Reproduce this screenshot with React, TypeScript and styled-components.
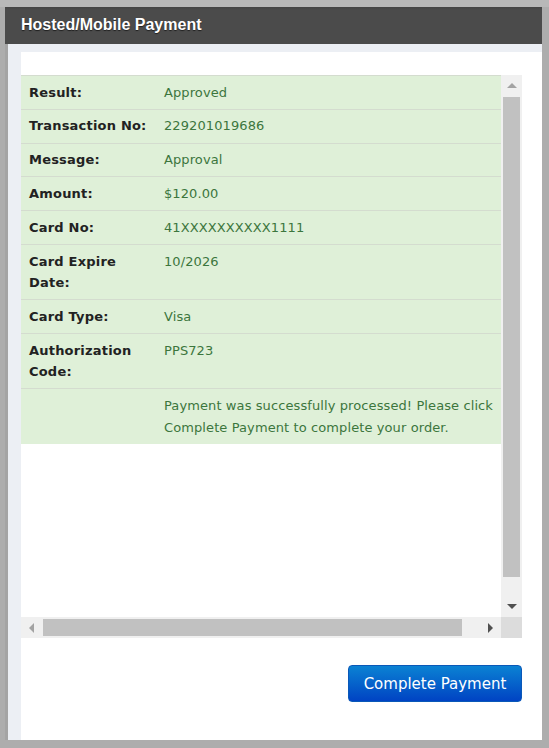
import React from 'react';
import styled, { createGlobalStyle } from 'styled-components';

const GlobalStyle = createGlobalStyle`
  html, body {
    margin: 0;
    padding: 0;
    background: #afafaf;
  }
  * {
    box-sizing: border-box;
  }
`;

const Page = styled.div`
  height: 748px;
  padding: 7px 7px 8px 5px;
  display: flex;
  background: linear-gradient(#b8b8b8 0, #b8b8b8 7px, #adadad 7px);
`;

const Window = styled.div`
  flex: 1;
  display: flex;
  flex-direction: column;
  background: #eceff4;
`;

const Header = styled.div`
  height: 37px;
  display: flex;
  align-items: center;
  padding: 0 0 2px 16px;
  background: linear-gradient(#444 0, #4b4b4b 3px, #4b4b4b 100%);
  color: #fff;
  font-family: 'Liberation Sans', Arial, sans-serif;
  font-weight: bold;
  font-size: 16px;
  text-shadow: 0 1px 1px rgba(0, 0, 0, 0.6);
`;

const Body = styled.div`
  flex: 1;
  display: flex;
  border-left: 3px solid #a4a4a4;
  padding: 8px 0 0 13px;
`;

const Content = styled.div`
  flex: 1;
  display: flex;
  flex-direction: column;
  background: #fff;
  padding: 23px 20px 0 0;
`;

const ScrollBox = styled.div`
  height: 563px;
  display: grid;
  grid-template-columns: 1fr 21px;
  grid-template-rows: 1fr 21px;
`;

const Viewport = styled.div`
  overflow: hidden;
  background: #fff;
`;

const VTrack = styled.div`
  background: #f0f0f0;
  display: grid;
  grid-template-rows: 21px 1fr 21px;
  padding: 0 2px;
`;

const HTrack = styled.div`
  background: #f0f0f0;
  display: grid;
  grid-template-columns: 21px 1fr 21px;
  padding: 2px 0;
`;

const Corner = styled.div`
  background: #dcdcdc;
`;

const ArrowBtn = styled.div`
  display: flex;
  align-items: center;
  justify-content: center;
`;

const VThumbArea = styled.div`
  padding: 1px 0 19px;
  display: flex;
`;

const HThumbArea = styled.div`
  padding: 0 18px 0 1px;
  display: flex;
`;

const Thumb = styled.div`
  flex: 1;
  background: #c1c1c1;
`;

const Triangle = styled.span<{ $dir: 'up' | 'down' | 'left' | 'right'; $color: string }>`
  width: 0;
  height: 0;
  border-style: solid;
  ${({ $dir, $color }) =>
    $dir === 'up'
      ? `border-width: 0 5px 5px 5px; border-color: transparent transparent ${$color} transparent;`
      : $dir === 'down'
      ? `border-width: 5px 5px 0 5px; border-color: ${$color} transparent transparent transparent;`
      : $dir === 'left'
      ? `border-width: 5px 5px 5px 0; border-color: transparent ${$color} transparent transparent;`
      : `border-width: 5px 0 5px 5px; border-color: transparent transparent transparent ${$color};`}
`;

const ResultTable = styled.table`
  width: 100%;
  border-collapse: collapse;
  table-layout: fixed;
  font-family: 'DejaVu Sans', Verdana, sans-serif;
  font-size: 13px;
  line-height: 21.6px;
`;

const Row = styled.tr`
  background: #dff0d8;
  border-top: 1px solid #d4dccf;
`;

const Label = styled.td`
  width: 135px;
  padding: 5.6px 8px;
  font-weight: bold;
  letter-spacing: 0.2px;
  color: #222;
  vertical-align: top;
`;

const Value = styled.td`
  padding: 5.6px 8px;
  letter-spacing: 0.1px;
  color: #3c763d;
  vertical-align: top;
`;

const Footer = styled.div`
  display: flex;
  justify-content: flex-end;
  padding-top: 27px;
`;

const PayButton = styled.button`
  height: 37px;
  width: 174px;
  border: 1px solid #0a58b8;
  border-radius: 4px;
  background: linear-gradient(#0b82d3, #0043c3);
  color: #fff;
  font-family: 'DejaVu Sans', Verdana, sans-serif;
  font-size: 15px;
  padding: 1px 0 0;
  cursor: pointer;
`;

const rows: [string, string][] = [
  ['Result:', 'Approved'],
  ['Transaction No:', '229201019686'],
  ['Message:', 'Approval'],
  ['Amount:', '$120.00'],
  ['Card No:', '41XXXXXXXXXX1111'],
  ['Card Expire Date:', '10/2026'],
  ['Card Type:', 'Visa'],
  ['Authorization Code:', 'PPS723'],
];

const App = () => {
  return (
    <>
      <GlobalStyle />
      <Page>
        <Window>
          <Header>Hosted/Mobile Payment</Header>
          <Body>
            <Content>
              <ScrollBox>
                <Viewport>
                  <ResultTable>
                    <tbody>
                      {rows.map(([label, value]) => (
                        <Row key={label}>
                          <Label>{label}</Label>
                          <Value>{value}</Value>
                        </Row>
                      ))}
                      <Row>
                        <Label />
                        <Value>
                          Payment was successfully processed! Please click Complete Payment to complete
                          your order.
                        </Value>
                      </Row>
                    </tbody>
                  </ResultTable>
                </Viewport>
                <VTrack>
                  <ArrowBtn>
                    <Triangle $dir="up" $color="#a3a3a3" />
                  </ArrowBtn>
                  <VThumbArea>
                    <Thumb />
                  </VThumbArea>
                  <ArrowBtn>
                    <Triangle $dir="down" $color="#505050" />
                  </ArrowBtn>
                </VTrack>
                <HTrack>
                  <ArrowBtn>
                    <Triangle $dir="left" $color="#a3a3a3" />
                  </ArrowBtn>
                  <HThumbArea>
                    <Thumb />
                  </HThumbArea>
                  <ArrowBtn>
                    <Triangle $dir="right" $color="#505050" />
                  </ArrowBtn>
                </HTrack>
                <Corner />
              </ScrollBox>
              <Footer>
                <PayButton>Complete Payment</PayButton>
              </Footer>
            </Content>
          </Body>
        </Window>
      </Page>
    </>
  );
};

export default App;
